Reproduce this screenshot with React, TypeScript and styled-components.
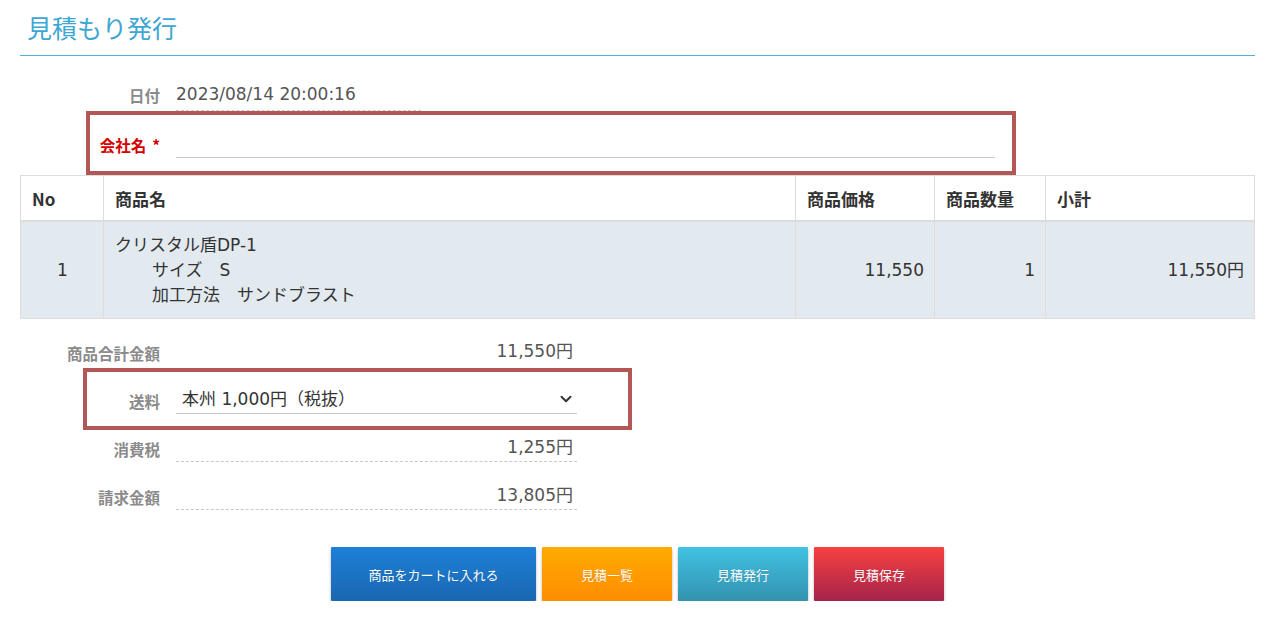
import styled, { createGlobalStyle } from 'styled-components';
import { ChevronDown } from 'lucide-react';

const GlobalStyle = createGlobalStyle`
  body {
    margin: 0;
    background: #fff;
    font-family: 'DejaVu Sans', 'Noto Sans CJK JP', sans-serif;
    color: #333;
  }
`;

const Page = styled.div`
  padding: 0 13px 0 20px;
`;

const Title = styled.h1`
  margin: 0;
  padding: 10px 7px 11px;
  font-family: 'Noto Sans CJK JP', sans-serif;
  font-size: 25px;
  line-height: 34px;
  font-weight: 400;
  color: #3ea6d2;
  border-bottom: 1px solid #4fb3d9;
`;

const FormRow = styled.div<{ $h: number; $mt?: number; $pt?: number }>`
  position: relative;
  display: flex;
  align-items: center;
  box-sizing: border-box;
  height: ${(p) => p.$h}px;
  margin-top: ${(p) => p.$mt ?? 0}px;
  padding-top: ${(p) => p.$pt ?? 0}px;
`;

const Label = styled.div<{ $required?: boolean }>`
  width: 140px;
  flex-shrink: 0;
  text-align: right;
  font-family: 'Noto Sans CJK JP', sans-serif;
  font-size: 15.5px;
  font-weight: 700;
  line-height: 24px;
  color: ${(p) => (p.$required ? '#d40000' : '#8a8a8a')};
`;

const Mark = styled.span`
  margin-left: 6px;
`;

const Field = styled.div<{ $width: number; $line: 'dashed' | 'solid' | 'none'; $h?: number }>`
  width: ${(p) => p.$width}px;
  margin-left: 16px;
  font-size: 17px;
  line-height: ${(p) => p.$h ?? 24}px;
  height: ${(p) => p.$h ?? 24}px;
  color: #555;
  border-bottom: ${(p) =>
    p.$line === 'none'
      ? '1px solid transparent'
      : `1px ${p.$line} ${p.$line === 'dashed' ? '#c8c8c8' : '#cccccc'}`};
`;

const Amount = styled(Field)`
  height: 27px;
  line-height: 24px;
  text-align: right;
  padding-right: 4px;
  box-sizing: border-box;
`;

const Highlight = styled.div<{ $left: number; $top: number; $w: number; $h: number }>`
  position: absolute;
  left: ${(p) => p.$left}px;
  top: ${(p) => p.$top}px;
  width: ${(p) => p.$w}px;
  height: ${(p) => p.$h}px;
  box-sizing: border-box;
  border: 4px solid #b25656;
  pointer-events: none;
`;

const Table = styled.table`
  width: 100%;
  table-layout: fixed;
  border-collapse: collapse;
  font-size: 17px;
  color: #333;
`;

const Col = styled.col<{ $w?: number }>`
  width: ${(p) => (p.$w ? `${p.$w}px` : 'auto')};
`;

const Th = styled.th`
  height: 44px;
  padding: 0 11px;
  text-align: left;
  font-family: 'Noto Sans CJK JP', sans-serif;
  font-size: 17px;
  font-weight: 700;
  border: 1px solid #dddddd;
  border-bottom: 2px solid #dddddd;
  background: #fff;
`;

const Td = styled.td<{ $align: 'left' | 'right' | 'center' }>`
  height: 96px;
  padding: 0 10px 0 11px;
  text-align: ${(p) => p.$align};
  vertical-align: middle;
  background: #e2eaf0;
  border: 1px solid #dddddd;
  line-height: 25px;
`;

const Option = styled.div`
  padding-left: 37px;
`;

const Summary = styled.div`
  margin-top: 8px;
`;

const SumRow = styled.div`
  position: relative;
  display: flex;
  align-items: flex-start;
  height: 48px;
  box-sizing: border-box;
  padding-top: 12px;
`;

const SumLabel = styled(Label)`
  margin-top: 2px;
`;

const Select = styled.div`
  width: 401px;
  height: 27px;
  margin-left: 16px;
  display: flex;
  align-items: flex-start;
  justify-content: space-between;
  padding: 0 2px 0 6px;
  box-sizing: border-box;
  font-size: 17px;
  line-height: 24px;
  color: #333;
  border-bottom: 1px solid #c8c8c8;

  svg {
    margin-top: 3px;
  }
`;

const Buttons = styled.div`
  display: flex;
  justify-content: center;
  gap: 6px;
  margin-top: 28px;
`;

const gradients: Record<string, string> = {
  blue: 'linear-gradient(#1e80d8, #1a67b1)',
  orange: 'linear-gradient(#ffab00, #ff8d00)',
  cyan: 'linear-gradient(#41c2e4, #3392ae)',
  red: 'linear-gradient(#f74141, #a5234a)',
};

const Button = styled.button<{ $tone: string; $w: number }>`
  width: ${(p) => p.$w}px;
  height: 54px;
  border: none;
  border-radius: 1px;
  background: ${(p) => gradients[p.$tone]};
  color: #fff;
  font-family: 'Noto Sans CJK JP', sans-serif;
  font-size: 13px;
  text-shadow: 0 0 1px rgba(0, 0, 0, 0.2);
  box-shadow: 0 2px 3px rgba(0, 0, 0, 0.3);
  cursor: pointer;
`;

export default function App() {
  return (
    <>
      <GlobalStyle />
      <Page>
        <Title>見積もり発行</Title>

        <FormRow $h={33} $mt={22}>
          <Label>日付</Label>
          <Field $width={245} $line='dashed' $h={32}>
            2023/08/14 20:00:16
          </Field>
        </FormRow>

        <FormRow $h={64} $pt={4}>
          <Label $required>
            会社名<Mark>*</Mark>
          </Label>
          <Field $width={819} $line='solid' />
          <Highlight $left={66} $top={0} $w={930} $h={64} />
        </FormRow>

        <Table>
          <colgroup>
            <Col $w={83} />
            <Col />
            <Col $w={139} />
            <Col $w={111} />
            <Col $w={209} />
          </colgroup>
          <thead>
            <tr>
              <Th>No</Th>
              <Th>商品名</Th>
              <Th>商品価格</Th>
              <Th>商品数量</Th>
              <Th>小計</Th>
            </tr>
          </thead>
          <tbody>
            <tr>
              <Td $align='center'>1</Td>
              <Td $align='left'>
                クリスタル盾DP-1
                <Option>サイズ　S</Option>
                <Option>加工方法　サンドブラスト</Option>
              </Td>
              <Td $align='right'>11,550</Td>
              <Td $align='right'>1</Td>
              <Td $align='right'>11,550円</Td>
            </tr>
          </tbody>
        </Table>

        <Summary>
          <SumRow>
            <SumLabel>商品合計金額</SumLabel>
            <Amount $width={401} $line='none'>11,550円</Amount>
          </SumRow>
          <SumRow>
            <SumLabel>送料</SumLabel>
            <Select>
              <span>本州 1,000円（税抜）</span>
              <ChevronDown size={18} strokeWidth={2.6} color='#333' />
            </Select>
            <Highlight $left={63} $top={-7} $w={549} $h={62} />
          </SumRow>
          <SumRow>
            <SumLabel>消費税</SumLabel>
            <Amount $width={401} $line='dashed'>1,255円</Amount>
          </SumRow>
          <SumRow>
            <SumLabel>請求金額</SumLabel>
            <Amount $width={401} $line='dashed'>13,805円</Amount>
          </SumRow>
        </Summary>

        <Buttons>
          <Button $tone='blue' $w={205}>商品をカートに入れる</Button>
          <Button $tone='orange' $w={130}>見積一覧</Button>
          <Button $tone='cyan' $w={130}>見積発行</Button>
          <Button $tone='red' $w={130}>見積保存</Button>
        </Buttons>
      </Page>
    </>
  );
}
